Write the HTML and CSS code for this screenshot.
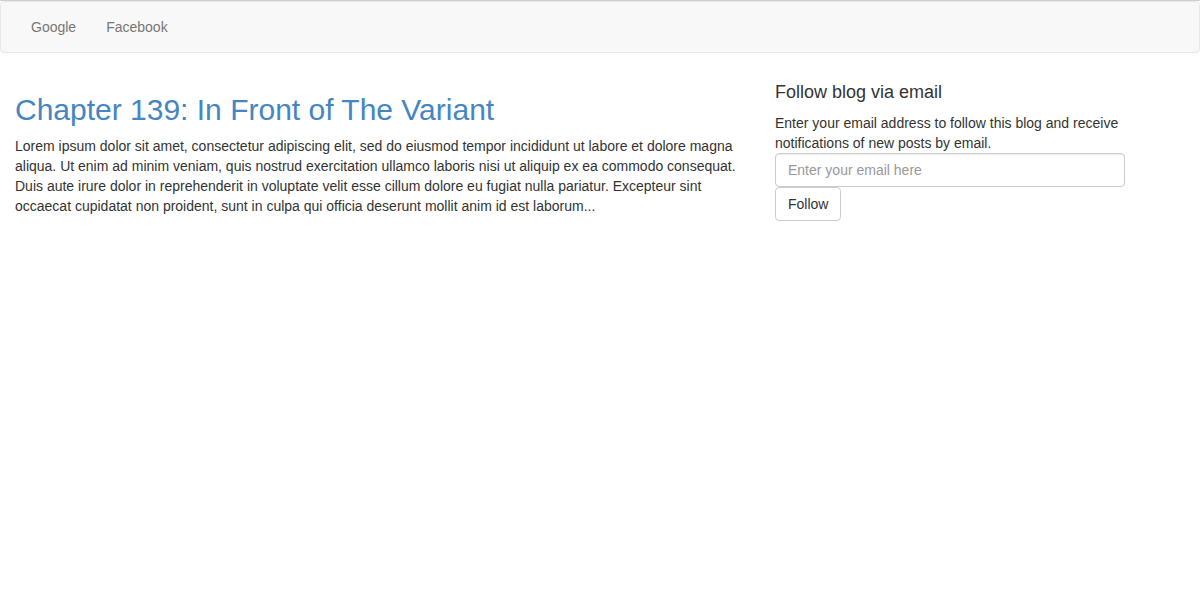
FILE: index.html
```html
<!DOCTYPE html>
<html lang="en">
<head>
<meta charset="utf-8">
<title>Blog</title>
<link rel="stylesheet" href="styles.css">
</head>
<body>
<nav class="navbar">
  <div class="navbar-inner">
    <ul class="nav">
      <li><a href="#">Google</a></li>
      <li><a href="#">Facebook</a></li>
    </ul>
  </div>
</nav>
<div class="main">
  <div class="content">
    <h2 class="post-title"><a href="#">Chapter 139: In Front of The Variant</a></h2>
    <p class="post-body">Lorem ipsum dolor sit amet, consectetur adipiscing elit, sed do eiusmod tempor incididunt ut labore et dolore magna aliqua. Ut enim ad minim veniam, quis nostrud exercitation ullamco laboris nisi ut aliquip ex ea commodo consequat. Duis aute irure dolor in reprehenderit in voluptate velit esse cillum dolore eu fugiat nulla pariatur. Excepteur sint occaecat cupidatat non proident, sunt in culpa qui officia deserunt mollit anim id est laborum...</p>
  </div>
  <aside class="sidebar">
    <h4 class="widget-title">Follow blog via email</h4>
    <p class="widget-text">Enter your email address to follow this blog and receive notifications of new posts by email.</p>
    <form class="follow-form">
      <input class="email-input" type="text" placeholder="Enter your email here">
      <button class="btn" type="button">Follow</button>
    </form>
  </aside>
</div>
</body>
</html>
```

FILE: styles.css
```css
* { box-sizing: border-box; }
html, body { margin: 0; padding: 0; }
body {
  font-family: "Liberation Sans", Arial, Helvetica, sans-serif;
  font-size: 14px;
  line-height: 20px;
  color: #333;
  background: #fff;
  border-top: 1px solid #cfcfcf;
}
a { text-decoration: none; }

.navbar {
  min-height: 50px;
  background: #f8f8f8;
  border: 1px solid #e7e7e7;
  border-radius: 4px;
  margin-bottom: 20px;
}
.navbar-inner { padding: 0 15px; }
.nav {
  list-style: none;
  margin: 0;
  padding: 0;
  display: flex;
}
.nav a {
  display: block;
  padding: 15px;
  line-height: 20px;
  color: #777;
}

.main {
  display: flex;
  align-items: flex-start;
}
.content {
  width: 760px;
  padding: 0 15px;
}
.sidebar {
  width: 380px;
  padding: 0 15px;
}

.post-title {
  margin: 20px 0 10px;
  font-size: 30px;
  font-weight: 500;
  line-height: 1.1;
}
.post-title a { color: #4586c2; }
.post-body { margin: 0 0 10px; }

.widget-title {
  margin: 10px 0 10px;
  font-size: 18px;
  font-weight: 500;
  line-height: 1.1;
  color: #333;
}
.widget-text { margin: 0; }
.follow-form { margin: 0; }
.email-input {
  display: block;
  width: 100%;
  height: 34px;
  padding: 6px 12px;
  font-family: inherit;
  font-size: 14px;
  line-height: 20px;
  color: #555;
  background: #fff;
  border: 1px solid #ccc;
  border-radius: 4px;
  box-shadow: inset 0 1px 1px rgba(0,0,0,.075);
  outline: none;
}
.email-input::placeholder { color: #999; }
.btn {
  display: inline-block;
  height: 34px;
  padding: 6px 12px;
  font-family: inherit;
  font-size: 14px;
  line-height: 20px;
  color: #333;
  background: #fff;
  border: 1px solid #ccc;
  border-radius: 4px;
  cursor: pointer;
}
```
